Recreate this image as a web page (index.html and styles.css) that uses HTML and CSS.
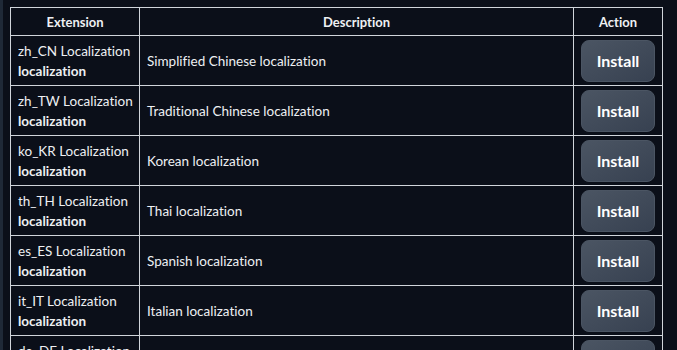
FILE: index.html
```html
<!DOCTYPE html>
<html>
<head>
<meta charset="utf-8">
<link rel="stylesheet" href="styles.css">
</head>
<body>
<div class="page">
  <table class="ext-table">
    <colgroup>
      <col class="c1"><col class="c2"><col class="c3">
    </colgroup>
    <thead>
      <tr><th>Extension</th><th>Description</th><th>Action</th></tr>
    </thead>
    <tbody>
      <tr><td class="name">zh_CN Localization<br><b>localization</b></td><td>Simplified Chinese localization</td><td class="act"><button class="btn">Install</button></td></tr>
      <tr><td class="name">zh_TW Localization<br><b>localization</b></td><td>Traditional Chinese localization</td><td class="act"><button class="btn">Install</button></td></tr>
      <tr><td class="name">ko_KR Localization<br><b>localization</b></td><td>Korean localization</td><td class="act"><button class="btn">Install</button></td></tr>
      <tr><td class="name">th_TH Localization<br><b>localization</b></td><td>Thai localization</td><td class="act"><button class="btn">Install</button></td></tr>
      <tr><td class="name">es_ES Localization<br><b>localization</b></td><td>Spanish localization</td><td class="act"><button class="btn">Install</button></td></tr>
      <tr><td class="name">it_IT Localization<br><b>localization</b></td><td>Italian localization</td><td class="act"><button class="btn">Install</button></td></tr>
      <tr><td class="name">de_DE Localization<br><b>localization</b></td><td>German localization</td><td class="act"><button class="btn">Install</button></td></tr>
    </tbody>
  </table>
</div>
</body>
</html>
```
FILE: styles.css
```css
html, body {
  margin: 0;
  padding: 0;
  background: #0b0f19;
  height: 100%;
  overflow: hidden;
}
.page {
  border-left: 3px solid #1f2937;
  padding: 7px 0 0 7px;
  min-height: 100%;
  box-sizing: border-box;
  font-family: "Lato", sans-serif;
  font-variant-ligatures: none;
  color: #eef0f3;
}
.ext-table {
  border-collapse: collapse;
  table-layout: fixed;
  width: 653px;
}
.c1 { width: 129px; }
.c2 { width: 434px; }
.c3 { width: 89px; }
th, td {
  border: 1px solid #d1d5db;
}
th {
  font-size: 13px;
  font-weight: 700;
  height: 27px;
  padding: 0;
  text-align: center;
}
td {
  font-size: 13.5px;
  height: 49px;
  padding: 0 7px;
  text-align: left;
  vertical-align: middle;
  line-height: 20px;
  white-space: nowrap;
}
td.act {
  padding: 0 0 0 7px;
}
.btn {
  display: block;
  width: 74px;
  height: 42px;
  border: 1px solid #4b5563;
  border-radius: 8px;
  background: linear-gradient(to bottom right, #4b5563, #374151);
  color: #fff;
  font-family: "Lato", sans-serif;
  font-variant-ligatures: none;
  font-weight: 700;
  font-size: 16px;
  padding: 0;
}
```
